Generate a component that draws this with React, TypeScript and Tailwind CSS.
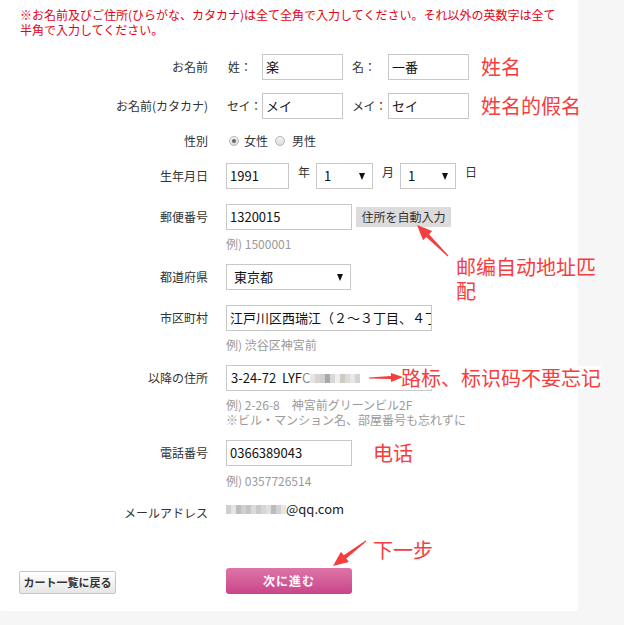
import type { ReactNode } from 'react';

const RED = '#f53d3d';

function arrowPoints(tx: number, ty: number, px: number, py: number, head: number, headW: number, s0: number, s1: number) {
  const dx = px - tx;
  const dy = py - ty;
  const len = Math.hypot(dx, dy);
  const ux = dx / len;
  const uy = dy / len;
  const nx = -uy;
  const ny = ux;
  const bx = px - ux * head;
  const by = py - uy * head;
  const pts = [
    [tx + (nx * s0) / 2, ty + (ny * s0) / 2],
    [bx + (nx * s1) / 2, by + (ny * s1) / 2],
    [bx + (nx * headW) / 2, by + (ny * headW) / 2],
    [px, py],
    [bx - (nx * headW) / 2, by - (ny * headW) / 2],
    [bx - (nx * s1) / 2, by - (ny * s1) / 2],
    [tx - (nx * s0) / 2, ty - (ny * s0) / 2],
  ];
  return pts.map((p) => p.map((v) => v.toFixed(1)).join(',')).join(' ');
}

function Label({ children, className = '' }: { children: ReactNode; className?: string }) {
  return (
    <div className={`w-[208px] shrink-0 text-right text-[12px] leading-[18px] text-[#333] whitespace-nowrap ${className}`}>{children}</div>
  );
}

function Box({ children, className = '' }: { children?: ReactNode; className?: string }) {
  return (
    <div className={`h-[26px] shrink-0 border border-[#c8c8c8] bg-white px-[3px] flex items-center text-[13px] text-[#111] overflow-hidden whitespace-nowrap ${className}`}>
      {children}
    </div>
  );
}

function Select({ value, className = '' }: { value: string; className?: string }) {
  return (
    <div className={`h-[26px] shrink-0 border border-[#c8c8c8] bg-white pl-[7px] pr-[7px] flex items-center justify-between text-[13px] text-[#111] ${className}`}>
      <span>{value}</span>
      <span className="w-0 h-0 border-x-[3.5px] border-x-transparent border-t-[7px] border-t-[#111]" />
    </div>
  );
}

function Example({ children }: { children: ReactNode }) {
  return <div className="text-[12px] leading-[15px] text-[#9a9a9a] whitespace-nowrap">{children}</div>;
}

function Radio({ checked }: { checked?: boolean }) {
  return (
    <span className="w-[10px] h-[10px] rounded-full border border-[#b5b5b5] bg-gradient-to-b from-[#f4f4f4] to-[#dcdcdc] flex items-center justify-center">
      {checked && <span className="w-[4px] h-[4px] rounded-full bg-[#666]" />}
    </span>
  );
}

function Mosaic({ shades }: { shades: string[] }) {
  return (
    <span className="flex h-[9px] shrink-0 blur-[0.6px]">
      {shades.map((c, i) => (
        <span key={i} className="w-[5px] h-full" style={{ backgroundColor: c }} />
      ))}
    </span>
  );
}

function Note({ children }: { children: ReactNode }) {
  return (
    <span className="text-[20px] leading-[26px] whitespace-nowrap" style={{ color: RED, fontFamily: '"Noto Sans CJK SC", sans-serif' }}>
      {children}
    </span>
  );
}

export default function App() {
  return (
    <div className="min-h-screen bg-[#f6f6f6]" style={{ fontFamily: '"Noto Sans CJK JP", "Noto Sans CJK SC", sans-serif' }}>
      <div className="relative w-[578px] bg-white rounded-b-[3px] pt-[7px] pb-[17px]">
        <div className="pl-[20px] text-[12px] leading-[15px] text-[#e60012] whitespace-nowrap">
          ※お名前及びご住所(ひらがな、カタカナ)は全て全角で入力してください。それ以外の英数字は全て
          <br />
          半角で入力してください。
        </div>

        {/* name */}
        <div className="mt-[17px] flex items-center">
          <Label>お名前</Label>
          <div className="ml-[18px] flex shrink-0 items-center text-[12px] text-[#333] whitespace-nowrap">
            <span className="w-[36px] shrink-0 pl-[2px]">姓：</span>
            <Box className="w-[81px]">楽</Box>
            <span className="w-[45px] shrink-0 pl-[9px]">名：</span>
            <Box className="w-[81px]">一番</Box>
            <span className="ml-[12px]">
              <Note>姓名</Note>
            </span>
          </div>
        </div>

        <div className="mt-[13px] flex items-center">
          <Label>お名前(カタカナ)</Label>
          <div className="ml-[18px] flex shrink-0 items-center text-[12px] text-[#333] whitespace-nowrap">
            <span className="w-[36px] shrink-0 pl-[1px] tracking-[-0.5px]">セイ：</span>
            <Box className="w-[81px]">メイ</Box>
            <span className="w-[45px] shrink-0 pl-[9px] tracking-[-0.5px]">メイ：</span>
            <Box className="w-[81px]">セイ</Box>
            <span className="ml-[12px]">
              <Note>姓名的假名</Note>
            </span>
          </div>
        </div>

        {/* gender */}
        <div className="mt-[12px] h-[20px] flex items-center">
          <Label>性別</Label>
          <div className="ml-[18px] flex items-center text-[12px] text-[#333] whitespace-nowrap">
            <span className="ml-[3px]"><Radio checked /></span>
            <span className="ml-[5px]">女性</span>
            <span className="ml-[7px]"><Radio /></span>
            <span className="ml-[7px]">男性</span>
          </div>
        </div>

        {/* birthday */}
        <div className="mt-[12px] flex items-center">
          <Label>生年月日</Label>
          <div className="ml-[18px] flex items-start text-[12px] text-[#333] whitespace-nowrap">
            <Box className="w-[63px]">1991</Box>
            <span className="ml-[9px] mr-[6px] pt-[1px] leading-[15px]">年</span>
            <Select value="1" className="w-[57px]" />
            <span className="ml-[9px] mr-[6px] pt-[1px] leading-[15px]">月</span>
            <Select value="1" className="w-[56px]" />
            <span className="ml-[9px] pt-[1px] leading-[15px]">日</span>
          </div>
        </div>

        {/* zip */}
        <div className="mt-[15px] flex items-start">
          <Label className="pt-[4px]">郵便番号</Label>
          <div className="ml-[18px] flex flex-col">
            <div className="flex items-center">
              <Box className="w-[126px]">1320015</Box>
              <span className="ml-[4px] h-[20px] w-[95px] shrink-0 bg-[#dcdcdc] text-[12px] text-[#333] whitespace-nowrap flex items-center justify-center">
                住所を自動入力
              </span>
            </div>
            <div className="mt-[6px]">
              <Example>例) 1500001</Example>
            </div>
          </div>
        </div>

        {/* prefecture */}
        <div className="mt-[13px] flex items-center">
          <Label>都道府県</Label>
          <div className="ml-[18px]">
            <Select value="東京都" className="w-[125px]" />
          </div>
        </div>

        {/* city */}
        <div className="mt-[15px] flex items-start">
          <Label className="pt-[4px]">市区町村</Label>
          <div className="ml-[18px] flex flex-col">
            <Box className="w-[206px]">江戸川区西瑞江（２～３丁目、４丁目１～１０番）</Box>
            <div className="mt-[6px]">
              <Example>例) 渋谷区神宮前</Example>
            </div>
          </div>
        </div>

        {/* address */}
        <div className="mt-[13px] flex items-start">
          <Label className="pt-[4px]">以降の住所</Label>
          <div className="ml-[18px] flex flex-col">
            <Box className="w-[206px]">
              <span className="pl-[1px]">3-24-72&nbsp;&nbsp;LYF</span>
              <span className="text-[#888]">C</span>
              <Mosaic shades={['#e6e6e6', '#d9d4cf', '#cfcfcf', '#a9a9a9', '#d8d8d8', '#efefef', '#cfcac4', '#dcdcdc', '#e8e8e8', '#d4d4d4']} />
            </Box>
            <div className="mt-[6px]">
              <Example>
                例) 2-26-8　神宮前グリーンビル2F
                <br />
                ※ビル・マンション名、部屋番号も忘れずに
              </Example>
            </div>
          </div>
        </div>

        {/* phone */}
        <div className="mt-[13px] flex items-start">
          <Label className="pt-[4px]">電話番号</Label>
          <div className="ml-[18px] flex flex-col">
            <div className="flex items-center">
              <Box className="w-[126px]">0366389043</Box>
              <span className="ml-[21px]">
                <Note>电话</Note>
              </span>
            </div>
            <div className="mt-[7px]">
              <Example>例) 0357726514</Example>
            </div>
          </div>
        </div>

        {/* mail */}
        <div className="mt-[12px] flex items-start">
          <Label className="pt-[4px]">メールアドレス</Label>
          <div className="ml-[18px] flex items-center h-[18px] text-[13px] text-[#222] whitespace-nowrap">
            <Mosaic shades={['#d0d0d0', '#e4e4e4', '#bdbdbd', '#cfcfcf', '#c4c4c4', '#dadada', '#c9c9c9', '#d6d6d6', '#e0e0e0', '#bcbcbc', '#d2d2d2', '#e6e6e6']} />
            <span>@qq.com</span>
          </div>
        </div>

        {/* buttons */}
        <div className="mt-[45px] flex items-end">
          <div className="w-[208px] shrink-0 pl-[19px]">
            <button className="h-[23px] w-[97px] rounded-[2px] border border-[#c4c4c4] bg-gradient-to-b from-white to-[#e6e6e6] text-[11px] font-bold text-[#333] whitespace-nowrap">
              カート一覧に戻る
            </button>
          </div>
          <div className="ml-[18px]">
            <button className="h-[26px] w-[126px] rounded-[3px] bg-gradient-to-b from-[#dd74a6] to-[#c9448a] text-[12px] font-bold text-white tracking-[1px]">
              次に進む
            </button>
          </div>
        </div>

        {/* annotations */}
        <div
          className="absolute left-[456px] top-[255px] text-[20px] leading-[24px] whitespace-nowrap"
          style={{ color: RED, fontFamily: '"Noto Sans CJK SC", sans-serif' }}
        >
          邮编自动地址匹
          <br />
          配
        </div>
        <div
          className="absolute left-[401px] top-[366px] bg-white text-[20px] leading-[23px] whitespace-nowrap"
          style={{ color: RED, fontFamily: '"Noto Sans CJK SC", sans-serif' }}
        >
          路标、标识码不要忘记
        </div>
        <div
          className="absolute left-[373px] top-[537px] text-[20px] leading-[26px] whitespace-nowrap"
          style={{ color: RED, fontFamily: '"Noto Sans CJK SC", sans-serif' }}
        >
          下一步
        </div>

        <svg className="absolute left-0 top-0 pointer-events-none" width="624" height="625">
          <polygon points={arrowPoints(448, 256, 417, 225, 15, 13, 1, 4)} fill={RED} />
          <polygon points={arrowPoints(369, 378, 403, 377, 12, 9, 1, 3)} fill={RED} />
          <polygon points={arrowPoints(366, 541, 333, 566, 15, 13, 1, 4)} fill={RED} />
        </svg>
      </div>
    </div>
  );
}
